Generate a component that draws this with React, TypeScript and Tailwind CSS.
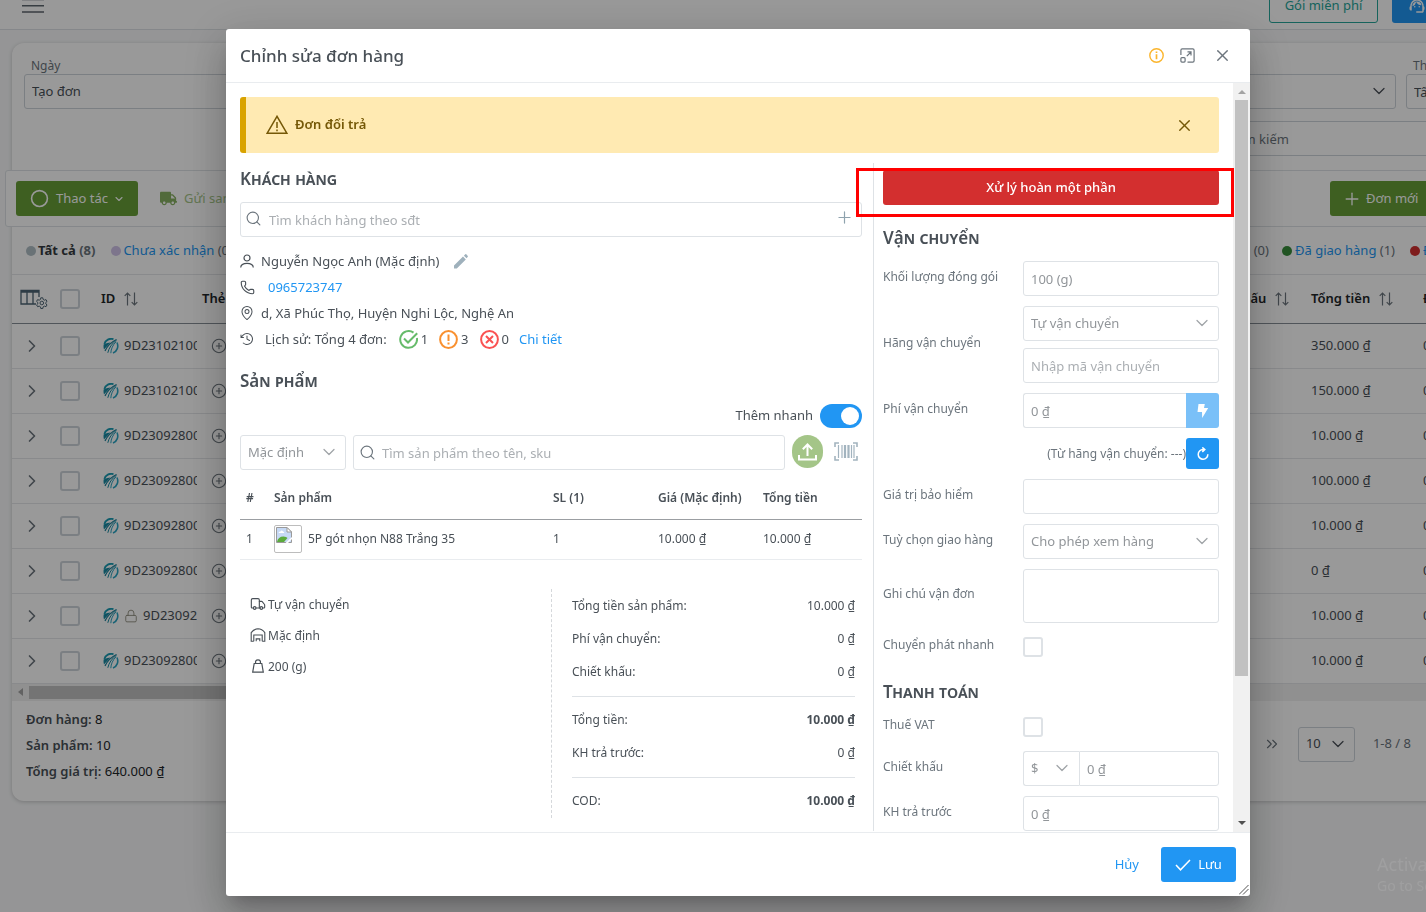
import React, { useState } from "react";
import { twMerge } from "tailwind-merge";
import {
  ChevronDown,
  ChevronRight,
  ChevronsRight,
  Circle,
  CirclePlus,
  Lock,
  Phone,
  Plus,
  Search,
  Truck,
  X,
} from "lucide-react";
import { PiClockCounterClockwise, PiMapPin } from "react-icons/pi";
import { FaTruck } from "react-icons/fa";
import { MdOutlineSupportAgent } from "react-icons/md";

type Order = {
  code: string;
  total: string;
  locked?: boolean;
};

const orders: Order[] = [
  { code: "9D23102100", total: "350.000 ₫" },
  { code: "9D23102100", total: "150.000 ₫" },
  { code: "9D23092800", total: "10.000 ₫" },
  { code: "9D23092800", total: "100.000 ₫" },
  { code: "9D23092800", total: "10.000 ₫" },
  { code: "9D23092800", total: "0 ₫" },
  { code: "9D23092", total: "10.000 ₫", locked: true },
  { code: "9D23092800", total: "10.000 ₫" },
];

const fieldClass =
  "h-[35px] w-full min-w-0 rounded-[3px] border border-[#dee2e6] bg-white px-[7px] text-[13px] text-[#92969a] placeholder:text-[#abafb3] outline-none";
const darkField = "border-[#ced4da] text-[#495057]";

/* ---------- icons ---------- */

const MenuIcon = () => (
  <svg width="22" height="15" viewBox="0 0 22 15" stroke="#5d666e" strokeWidth="1.6">
    <path d="M0 1.5h22M0 7.800h22M0 14h22" />
  </svg>
);

const SortIcon = () => (
  <svg width="14" height="14" viewBox="0 0 14 14" fill="none" stroke="#6c757d" strokeWidth="1.2">
    <path d="M3.5 13.5V1M.7 3.8 3.5 1l2.8 2.8M10.5.5V13M7.7 10.2l2.8 2.8 2.8-2.8" />
  </svg>
);

const ColumnsIcon = () => (
  <svg width="28" height="20" viewBox="0 0 28 20" fill="none" stroke="#4d6575" strokeWidth="1.3">
    <path d="M16 15H1V1.500h18V8M1 3h18M7 2v13M13 2v13" />
    <circle cx="21.800" cy="14" r="1.800" strokeWidth="1" />
    <path
      strokeWidth="1"
      d="m20.800 8.800-.3 1.600-1.300.8-1.600-.6-1 1.800 1.200 1.100v1.300l-1.200 1.100 1 1.800 1.600-.6 1.300.8.3 1.600h2l.3-1.600 1.300-.8 1.600.6 1-1.800-1.200-1.100v-1.300l1.200-1.100-1-1.800-1.600.6-1.300-.8-.3-1.600z"
    />
  </svg>
);

const ShopLogo = () => (
  <svg width="16" height="16" viewBox="0 0 16 16" fill="none" className="shrink-0">
    <path d="M10.500 1.200A7 7 0 0 0 1.400 6" stroke="#1a9cb3" strokeWidth="1.800" />
    <path d="M.6 6.500Q4.500 4.500 7.500 4.500L1 11.500Q.2 9 .6 6.500z" fill="#1a8ba3" />
    <path d="M2 13C4 8.500 8.500 4 13.500 1.500" stroke="#1a7f99" strokeWidth="1.200" />
    <path d="M4.800 14.800C5.800 10 9 5.500 13.500 2.200" stroke="#1a8ba3" />
    <path d="M7.800 15.200C8 11 9.800 7 13 3.800" stroke="#2aa5c4" />
    <path d="M14 4.500c1.800 4 .3 8.800-4 10.600" stroke="#2aa5c4" strokeWidth="1.600" />
  </svg>
);

const InfoIcon = () => (
  <svg width="15" height="15" viewBox="0 0 15 15" fill="none" stroke="#fbb52d">
    <circle cx="7.500" cy="7.500" r="6.700" strokeWidth="1.400" />
    <path d="M7.500 6.300v5M7.500 3.600v1.500" strokeWidth="1.700" />
  </svg>
);

const MaximizeIcon = () => (
  <svg width="15" height="15" viewBox="0 0 15 15" fill="none" stroke="#6c757d" strokeWidth="1.200">
    <path d="M.9 7V2.200Q.9.9 2.200.9h10.600q1.300 0 1.300 1.300v10.600q0 1.300-1.300 1.300H7.500" />
    <rect x=".9" y="9.600" width="4.200" height="4.500" rx="1" />
    <path d="M6.800 8.200 11 4M7.500 3.900H11v3.500" />
  </svg>
);

const WarningIcon = () => (
  <svg width="22" height="20" viewBox="0 0 22 20" fill="none" stroke="#755807" strokeWidth="1.500">
    <path d="M11 1.300 1.200 18.200h19.600zM11 7v6M11 14.500v1.700" />
  </svg>
);

const UserIcon = () => (
  <svg width="14" height="14" viewBox="0 0 14 14" fill="none" stroke="#495057" strokeWidth="1.200">
    <circle cx="7" cy="4" r="3" />
    <path d="M.7 13.500C.9 10.800 3.300 9.400 7 9.400s6.100 1.400 6.300 4.100" />
  </svg>
);

const PencilIcon = () => (
  <svg width="14" height="15" viewBox="0 0 14 15" fill="#9fb1bc">
    <path d="M0 14.500v-2.900L9 2.600l2.800 2.800-9 9.100zM9.900 1.700 11.300.3q.5-.4 1 0l1.500 1.600q.3.400 0 .8l-1.200 1.600z" />
  </svg>
);

const DoneIcon = () => (
  <svg width="19" height="19" viewBox="0 0 19 19" fill="none" stroke="#66bb6a" strokeWidth="2">
    <path d="M17.900 8A8.400 8.400 0 1 1 14.500 2.600" />
    <path d="m5 8.500 4 4 9.200-9.200" />
  </svg>
);

const AlertIcon = () => (
  <svg width="19" height="19" viewBox="0 0 19 19" fill="none" stroke="#f9902f" strokeWidth="2">
    <circle cx="9.500" cy="9.500" r="8.400" />
    <path d="M9.500 4.500V11M9.500 12.500v2" />
  </svg>
);

const FailIcon = () => (
  <svg width="19" height="19" viewBox="0 0 19 19" fill="none" stroke="#fa5252" strokeWidth="2">
    <circle cx="9.500" cy="9.500" r="8.400" />
    <path d="m6 6 7 7m0-7-7 7" />
  </svg>
);

const UploadIcon = () => (
  <svg width="19" height="18" viewBox="0 0 19 18" fill="none" stroke="#fff" strokeWidth="2">
    <path d="M9.500 13V1.500M4.800 6.200l4.700-4.700 4.700 4.700M1 12v4.500h17V12" />
  </svg>
);

const BarcodeIcon = () => (
  <svg width="24" height="19" viewBox="0 0 24 19" fill="none" stroke="#a3b4bf">
    <path d="M1 5V1h4M19 1h4v4M23 14v4h-4M5 18H1v-4" strokeWidth="1.600" />
    <path d="M4.500 3v13M8 3v13M17.500 3v13M20 3v13" strokeWidth="1.200" />
    <path d="M11 3v13M14.500 3v13" strokeWidth="2.200" />
  </svg>
);

const BrokenImage = () => (
  <svg width="16" height="16" viewBox="0 0 16 16">
    <path d="M.5.5H11L15.500 5v10.500H.5z" fill="#c6d9f5" stroke="#9a9a9a" />
    <path d="M11 .5V5h4.500z" fill="#fff" stroke="#9a9a9a" />
    <path d="M2.500 6q.3-1.800 2-1.500Q5.500 2.500 7 4.500q1.500.2 1.200 1.500z" fill="#fff" />
    <path d="M1 15q1-5.500 6.500-5.500 3 .2 4 1.500L8 15z" fill="#5bab3c" />
    <path d="m9.500 16 6.500-6v2l-4 4z" fill="#fff" />
  </svg>
);

const WarehouseIcon = () => (
  <svg width="16" height="14" viewBox="0 0 16 14" fill="none" stroke="#495057" strokeWidth="1.100">
    <path d="M3.800 13.200H1.200V4.600Q4 1 8 .8q4 .2 6.800 3.800v8.600h-2.600M3.800 13.200V7h8.400v6.200M6.200 13.200v-2.300h3.600v2.300" />
  </svg>
);

const WeightIcon = () => (
  <svg width="12" height="14" viewBox="0 0 12 14" fill="none" stroke="#495057" strokeWidth="1.200">
    <path d="M2.200 4.500h7.600l1.500 8.700H.7zM3.800 4.200C3 2.500 4 .8 6 .8s3 1.700 2.200 3.400" />
  </svg>
);

const BoltIcon = () => (
  <svg width="12" height="14" viewBox="0 0 12 14" fill="#fff">
    <path d="M1.500 0h6.300L7 4h4.200L5.200 14 5 8H.5z" />
  </svg>
);

const RefreshIcon = () => (
  <svg width="12" height="13" viewBox="0 0 12 13" fill="none" stroke="#fff" strokeWidth="1.500">
    <path d="M10.800 7.200A4.800 4.800 0 1 1 6 2.600h1.500M5.300.4l2.500 2.200-2.500 2.300" />
  </svg>
);

const CheckIcon = () => (
  <svg width="16" height="12" viewBox="0 0 16 12" fill="none" stroke="#fff" strokeWidth="1.500">
    <path d="m1 6 4.500 4.800L15 1" />
  </svg>
);

const ResizeGrip = () => (
  <svg width="10" height="10" viewBox="0 0 10 10" stroke="#555" className="absolute right-px bottom-px">
    <path d="M0 9.500 9.500 0M4 9.500 9.500 4" />
  </svg>
);

/* ---------- shared bits ---------- */

type selectProps = {
  id: string;
  value: string;
  className?: string;
  fieldStyle?: string;
  iconColor?: string;
};
const SelectField = ({
  id,
  value,
  className = "w-full",
  fieldStyle,
  iconColor = "#a0a4a8",
}: selectProps) => (
  <div className={twMerge("relative", className)}>
    <select id={id} aria-label={value} className={twMerge(fieldClass, "block appearance-none", fieldStyle)}>
      <option>{value}</option>
    </select>
    <ChevronDown
      size={20}
      strokeWidth={1.5}
      color={iconColor}
      className="pointer-events-none absolute top-[7px] right-[7px]"
    />
  </div>
);

const Box = ({ id, dark }: { id: string; dark?: boolean }) => (
  <input
    id={id}
    type="checkbox"
    aria-label={id}
    className={twMerge(
      "block size-5 shrink-0 appearance-none rounded-[3px] border-2 border-[#dee2e6] bg-white",
      dark && "border-[#ced4da]"
    )}
  />
);

// the small caps only cover part of the alphabet, so some letters stay lower case
const SectionTitle = ({ children }: { children: React.ReactNode }) => (
  <h2 className="text-[17px] leading-[22px] font-semibold text-[#495057] [font-variant-caps:small-caps]">
    {children}
  </h2>
);
const Lower = ({ children }: { children: React.ReactNode }) => (
  <span className="[font-variant-caps:normal]">{children}</span>
);

type rowProps = {
  id: string;
  label: string;
  children: React.ReactNode;
};
const FormRow = ({ id, label, children }: rowProps) => (
  <div className="flex min-h-7 items-center">
    <label htmlFor={id} className="w-[140px] shrink-0 pb-1 text-xs text-[#6c757d]">
      {label}
    </label>
    <div className="flex min-w-0 flex-1 flex-col gap-[7px]">{children}</div>
  </div>
);

/* ---------- order list behind the dialog ---------- */

const Dot = ({ className }: { className: string }) => (
  <span className={twMerge("size-2.5 rounded-full", className)} />
);

const OrdersPage = () => (
  <div className="-mr-[50px]">
    <header className="-mt-[30px] flex h-[60px] items-end justify-between border-b border-[#dee2e6] bg-white pr-3 pb-[6px] pl-[22px]">
      <button aria-label="Menu" className="flex h-[35px] items-center">
        <MenuIcon />
      </button>
      <div className="flex gap-[14px]">
        <button className="h-[35px] w-[109px] rounded-[3px] border border-[#26a69a] text-[13px] text-[#26a69a]">
          Gói miễn phí
        </button>
        <button aria-label="Hỗ trợ" className="flex h-[35px] w-[72px] items-center rounded-[3px] bg-[#2196f3] pl-4 text-white">
          <MdOutlineSupportAgent size={18} />
        </button>
      </div>
    </header>

    <div className="mx-3 mt-[13px] rounded-xl bg-white shadow-[0_1px_4px_rgba(0,0,0,0.2)]">
      <div className="flex h-[127px] flex-col px-3 pt-[15px]">
        <div className="flex gap-[10px]">
          <div className="flex-1">
            <label htmlFor="date" className="block px-[7px] text-xs leading-4 text-[#6c757d]">Ngày</label>
            <SelectField id="date" value="Tạo đơn" iconColor="#495057" fieldStyle={darkField} />
          </div>
          <div className="flex-1">
            <label htmlFor="source" className="block px-[7px] text-xs leading-4 text-[#6c757d]">Nguồn</label>
            <SelectField id="source" value="Tất cả" iconColor="#495057" fieldStyle={darkField} />
          </div>
          <div className="w-[46px]">
            <label htmlFor="tag" className="block px-[7px] text-xs leading-4 text-[#6c757d]">Thẻ</label>
            <input id="tag" defaultValue="Tất cả" className={twMerge(fieldClass, "block", darkField)} />
          </div>
        </div>
        <div className="mt-3 flex justify-end">
          <div className="w-[260px]">
            <input
              aria-label="Tìm kiếm"
              placeholder="Tìm kiếm"
              className={twMerge(fieldClass, "border-[#ced4da] pl-[40px] placeholder:text-[#6c757d]")}
            />
          </div>
        </div>
      </div>

      <div className="-mx-[7px] flex h-[57px] items-center justify-between rounded-[3px] border border-[#dee2e6] bg-white px-[10px]">
        <div className="flex items-center gap-[22px]">
          <button className="flex h-[35px] w-[122px] items-center rounded-[3px] bg-[#689f38] pl-[14px] text-[13px] text-white">
            <Circle size={19} strokeWidth={2} className="mr-[7px]" />
            Thao tác
            <ChevronDown size={12} strokeWidth={2.2} className="ml-[5px]" />
          </button>
          <button className="flex items-center gap-[7px] text-[13px] text-[#a4c588]">
            <FaTruck size={17} className="text-[#88b163]" />
            Gửi sang hãng vận chuyển
          </button>
        </div>
        <button className="flex h-[35px] w-[130px] items-center gap-1 rounded-[3px] bg-[#689f38] pl-3 text-[13px] text-white">
          <Plus size={20} strokeWidth={1.6} />
          Đơn mới
        </button>
      </div>

      <div className="flex h-12 items-center justify-between border-b border-[#e4e6e9] pl-[14px] text-[13px] text-[#6c757d]">
        <div className="flex items-center gap-[2px]">
          <Dot className="bg-[#b0bec5]" />
          <b className="mr-[14px] font-bold text-[#343a40]">
            Tất cả <span className="text-[#6c757d]">(8)</span>
          </b>
          <Dot className="bg-[#d1c4e9]" />
          <span><a href="#new" className="text-[#2196f3]">Chưa xác nhận</a> (0)</span>
        </div>
        <div className="flex items-center gap-[3px]">
          <span className="mr-[10px]">(0)</span>
          <Dot className="bg-[#388e3c]" />
          <span className="mr-3"><a href="#done" className="text-[#2196f3]">Đã giao hàng</a> (1)</span>
          <Dot className="bg-[#d32f2f]" />
          <a href="#returned" className="w-[41px] truncate text-[#2196f3]">Đang hoàn</a>
        </div>
      </div>

      <table className="w-full table-fixed border-collapse text-left text-[13px] text-[#495057]">
        <thead>
          <tr className="h-12 border-b border-[#868e96] text-[#212529] [&>th]:font-semibold">
            <th className="w-10 pl-2"><ColumnsIcon /></th>
            <th className="w-[39px] pl-2"><Box id="all" dark /></th>
            <th className="w-[111px] pl-[10px]">
              <span className="flex items-center gap-[9px]">ID <SortIcon /></span>
            </th>
            <th>Thẻ</th>
            <th className="w-[101px] whitespace-nowrap">
              <span className="flex items-center gap-[9px]">Chiết khấu <SortIcon /></span>
            </th>
            <th className="w-[112px] pl-3">
              <span className="flex items-center gap-[9px]">Tổng tiền <SortIcon /></span>
            </th>
            <th className="w-[53px] pl-3">Đã trả</th>
          </tr>
        </thead>
        <tbody>
          {orders.map((order, index) => (
            <tr key={index} className="h-[45px] border-b border-[#e4e6e9]">
              <td className="pl-[10px]"><ChevronRight size={20} strokeWidth={2} color="#6c757d" /></td>
              <td className="pl-2"><Box id={`row-${index}`} dark /></td>
              <td className="pr-[5px] pl-3">
                <div className="flex items-center gap-[5px] overflow-hidden">
                  <ShopLogo />
                  {order.locked && <Lock size={14} strokeWidth={1.5} color="#8d8a7c" className="shrink-0" />}
                  <span>{order.code}</span>
                </div>
              </td>
              <td className="pl-[9px]"><CirclePlus size={16} strokeWidth={1.6} color="#6c757d" /></td>
              <td />
              <td className="pl-3">{order.total}</td>
              <td className="pl-3">0 ₫</td>
            </tr>
          ))}
        </tbody>
      </table>

      <div className="flex h-[17px] items-center bg-[#f1f1f1]">
        <span className="ml-[6px] border-y-4 border-r-[5px] border-y-transparent border-r-[#a3a3a3]" />
        <span className="ml-[6px] h-[13px] w-[500px] bg-[#c1c1c1]" />
      </div>

      <div className="flex h-[100px] justify-between pr-[53px] pl-[14px] text-[13px] text-[#212529]">
        <div className="pt-[5px] leading-[26px] [&_b]:font-semibold [&_b]:text-[#495057]">
          <p><b>Đơn hàng:</b> 8</p>
          <p><b>Sản phẩm:</b> 10</p>
          <p><b>Tổng giá trị:</b> 640.000 ₫</p>
        </div>
        <div className="flex items-center self-start pt-[26px] text-[#6c757d]">
          <button aria-label="Trang cuối" className="mr-[17px]"><ChevronsRight size={18} strokeWidth={1.5} /></button>
          <SelectField id="page-size" value="10" className="mr-[18px] w-[57px]" iconColor="#495057" fieldStyle={darkField} />
          <span>1-8 / 8</span>
        </div>
      </div>
    </div>
  </div>
);

/* ---------- dialog ---------- */

const Customer = () => (
  <section className="text-[13px] text-[#495057]">
    <SectionTitle>Khách hàng</SectionTitle>
    <div className="relative mt-3">
      <Search size={17} strokeWidth={1.6} color="#6c757d" className="absolute top-2 left-[5px]" />
      <input
        aria-label="Tìm khách hàng"
        placeholder="Tìm khách hàng theo sđt"
        className={twMerge(fieldClass, "block pl-7")}
      />
      <button aria-label="Thêm khách hàng" className="absolute top-[6px] right-2">
        <Plus size={19} strokeWidth={1.5} color="#8fa3ae" />
      </button>
    </div>
    <div className="mt-[11px] leading-[26px]">
      <p className="flex items-center">
        <span className="mr-[7px]"><UserIcon /></span> Nguyễn Ngọc Anh (Mặc định)
        <button aria-label="Sửa khách hàng" className="ml-[15px]"><PencilIcon /></button>
      </p>
      <p className="flex items-center">
        <Phone size={15} strokeWidth={1.8} className="mr-[13px]" />
        <a href="tel:0965723747" className="text-[#2196f3]">0965723747</a>
      </p>
      <p className="flex items-center">
        <PiMapPin size={16} className="mr-[6px] -ml-px" /> d, Xã Phúc Thọ, Huyện Nghi Lộc, Nghệ An
      </p>
      <p className="flex items-center">
        <PiClockCounterClockwise size={16} className="mr-[10px] -ml-px" /> Lịch sử: Tổng 4 đơn:
        <span className="ml-3 flex items-center gap-[3px]"><DoneIcon /> 1</span>
        <span className="ml-[11px] flex items-center gap-[3px]"><AlertIcon /> 3</span>
        <span className="ml-[11px] flex items-center gap-[3px]"><FailIcon /> 0</span>
        <a href="#history" className="ml-[10px] text-[#2196f3]">Chi tiết</a>
      </p>
    </div>
  </section>
);

const Products = () => {
  const [quickAdd, setQuickAdd] = useState(true);
  return (
    <section className="mt-[18px] text-[#495057]">
      <SectionTitle>S<Lower>ả</Lower>n ph<Lower>ẩ</Lower>m</SectionTitle>
      <label className="mt-3 flex h-6 items-center justify-end gap-[7px] text-[13px]">
        Thêm nhanh
        <input
          type="checkbox"
          checked={quickAdd}
          onChange={() => setQuickAdd((prev) => !prev)}
          className="relative h-6 w-[42px] appearance-none rounded-full bg-[#ced4da] before:absolute before:top-[3px] before:left-[3px] before:size-[18px] before:rounded-full before:bg-white checked:bg-[#2196f3] checked:before:left-[21px]"
        />
      </label>
      <div className="mt-[7px] flex items-center gap-[7px]">
        <SelectField id="warehouse" value="Mặc định" className="w-[106px] shrink-0" />
        <div className="relative flex-1">
          <Search size={17} strokeWidth={1.6} color="#6c757d" className="absolute top-[9px] left-[6px]" />
          <input
            aria-label="Tìm sản phẩm"
            placeholder="Tìm sản phẩm theo tên, sku"
            className={twMerge(fieldClass, "block pl-7")}
          />
        </div>
        <button aria-label="Tải lên" className="flex h-[33px] w-[31px] items-center justify-center self-start rounded-full bg-[#a4c588]">
          <UploadIcon />
        </button>
        <button aria-label="Quét mã vạch" className="flex h-[33px] w-8 items-center justify-center self-start">
          <BarcodeIcon />
        </button>
      </div>

      <table className="mt-[7px] w-full table-fixed text-left text-xs">
        <thead>
          <tr className="h-[42px] border-b border-[#9b9ea2] [&>th]:font-semibold">
            <th className="w-[34px] pl-[6px]">#</th>
            <th>Sản phẩm</th>
            <th className="w-[105px]">SL (1)</th>
            <th className="w-[105px]">Giá (Mặc định)</th>
            <th className="w-[99px]">Tổng tiền</th>
          </tr>
        </thead>
        <tbody>
          <tr className="h-10 border-b border-[#e9ecef]">
            <td className="pl-[6px]">1</td>
            <td>
              <div className="flex items-center gap-[6px]">
                <span className="size-7 rounded-[2px] border border-[#bdbdbd] p-px"><BrokenImage /></span>
                5P gót nhọn N88 Trắng 35
              </div>
            </td>
            <td>1</td>
            <td>10.000 ₫</td>
            <td>10.000 ₫</td>
          </tr>
        </tbody>
      </table>
    </section>
  );
};

type lineProps = { label: string; value: string; strong?: boolean };
const SummaryLine = ({ label, value, strong }: lineProps) => (
  <div className="flex h-[33px] items-center justify-between">
    <dt>{label}</dt>
    <dd className={twMerge(strong && "font-bold")}>{value}</dd>
  </div>
);

const Summary = () => (
  <section className="mt-[29px] flex text-xs text-[#495057]">
    <ul className="flex-1 pl-[10px] leading-[31px]">
      <li className="flex items-center gap-[2px]"><Truck size={16} strokeWidth={1.7} /> Tự vận chuyển</li>
      <li className="flex items-center gap-[2px]"><WarehouseIcon /> Mặc định</li>
      <li className="flex items-center gap-[2px]"><span className="flex w-4 justify-center"><WeightIcon /></span> 200 (g)</li>
    </ul>
    <dl className="w-[311px] border-l border-dashed border-[#d5d8db] pt-px pr-[7px] pl-5">
      <SummaryLine label="Tổng tiền sản phẩm:" value="10.000 ₫" />
      <SummaryLine label="Phí vận chuyển:" value="0 ₫" />
      <SummaryLine label="Chiết khấu:" value="0 ₫" />
      <div className="my-[7px] border-t border-[#dee2e6]" />
      <SummaryLine label="Tổng tiền:" value="10.000 ₫" strong />
      <SummaryLine label="KH trả trước:" value="0 ₫" />
      <div className="my-[7px] border-t border-[#dee2e6]" />
      <SummaryLine label="COD:" value="10.000 ₫" strong />
    </dl>
  </section>
);

const Shipping = () => (
  <div className="flex flex-col gap-[10px]">
    <div className="pb-[2px]">
      <SectionTitle>V<Lower>ậ</Lower>n chuy<Lower>ể</Lower>n</SectionTitle>
    </div>
    <FormRow id="weight" label="Khối lượng đóng gói">
      <input id="weight" defaultValue="100 (g)" className={fieldClass} />
    </FormRow>
    <FormRow id="carrier" label="Hãng vận chuyển">
      <SelectField id="carrier" value="Tự vận chuyển" />
      <input aria-label="Mã vận chuyển" placeholder="Nhập mã vận chuyển" className={fieldClass} />
    </FormRow>
    <FormRow id="fee" label="Phí vận chuyển">
      <div className="flex">
        <input id="fee" defaultValue="0 ₫" className={twMerge(fieldClass, "rounded-r-none border-r-0")} />
        <button aria-label="Tính phí" className="flex w-[33px] shrink-0 items-center justify-center rounded-r-[3px] bg-[#7ac0f8]">
          <BoltIcon />
        </button>
      </div>
    </FormRow>
    <div className="flex items-center justify-end text-xs text-[#6c757d]">
      (Từ hãng vận chuyển: ---)
      <button aria-label="Làm mới" className="flex h-[31px] w-[33px] items-center justify-center rounded-[3px] bg-[#2196f3]">
        <RefreshIcon />
      </button>
    </div>
    <FormRow id="insurance" label="Giá trị bảo hiểm">
      <input id="insurance" className={fieldClass} />
    </FormRow>
    <FormRow id="inspect" label="Tuỳ chọn giao hàng">
      <SelectField id="inspect" value="Cho phép xem hàng" />
    </FormRow>
    <FormRow id="note" label="Ghi chú vận đơn">
      <textarea id="note" className="block h-[54px] resize-none rounded-[3px] border border-[#dee2e6]" />
    </FormRow>
    <FormRow id="express" label="Chuyển phát nhanh">
      <Box id="express" />
    </FormRow>
    <div className="pt-[10px]">
      <SectionTitle>Thanh toán</SectionTitle>
    </div>
    <FormRow id="vat" label="Thuế VAT">
      <Box id="vat" />
    </FormRow>
    <FormRow id="discount" label="Chiết khấu">
      <div className="flex">
        <SelectField id="discount-type" value="$" className="w-14 shrink-0" fieldStyle="rounded-r-none border-r-0" />
        <input id="discount" defaultValue="0 ₫" className={twMerge(fieldClass, "rounded-l-none")} />
      </div>
    </FormRow>
    <FormRow id="prepaid" label="KH trả trước">
      <input id="prepaid" defaultValue="0 ₫" className={fieldClass} />
    </FormRow>
  </div>
);

const OrderDialog = () => (
  <div
    role="dialog"
    aria-label="Chỉnh sửa đơn hàng"
    className="relative flex flex-1 flex-col rounded-[3px] bg-white shadow-[0_11px_15px_-7px_rgba(0,0,0,0.2),0_24px_38px_3px_rgba(0,0,0,0.14),0_9px_46px_8px_rgba(0,0,0,0.12)]"
  >
    <header className="flex h-[54px] shrink-0 items-center justify-between border-b border-[#e9ecef] pr-[18px] pl-[14px]">
      <h1 className="text-[17px] font-medium text-[#495057]">Chỉnh sửa đơn hàng</h1>
      <div className="flex items-center">
        <button aria-label="Thông tin" className="mr-4"><InfoIcon /></button>
        <button aria-label="Phóng to" className="mr-[18px]"><MaximizeIcon /></button>
        <button aria-label="Đóng" className="text-[#6c757d]"><X size={19} strokeWidth={1.7} /></button>
      </div>
    </header>

    <div className="flex min-h-0 flex-1 overflow-hidden">
      <div className="min-w-0 flex-1 p-[14px] pb-0">
        <div className="flex h-14 items-center rounded-[3px] border-l-[6px] border-[#d9a300] bg-[#ffeab2] pr-[25px] pl-5 text-[13px] font-semibold text-[#755807]">
          <WarningIcon />
          <span className="ml-[7px] flex-1">Đơn đổi trả</span>
          <button aria-label="Đóng thông báo"><X size={19} strokeWidth={1.7} /></button>
        </div>

        <div className="mt-[10px] flex gap-[11px]">
          <div className="min-w-0 flex-1 pt-[5px]">
            <Customer />
            <Products />
            <Summary />
          </div>
          <div className="relative w-[346px] shrink-0 border-l border-[#dee2e6] pt-[7px] pl-[9px]">
            <button className="mb-[22px] block h-[35px] w-full rounded-[3px] bg-[#d32f2f] text-[13px] font-medium text-white">
              Xử lý hoàn một phần
            </button>
            <Shipping />
            <div className="pointer-events-none absolute top-[5px] -right-[15px] -left-[18px] z-10 h-[49px] border-[3px] border-[#ff0000]" />
          </div>
        </div>
      </div>

      <div className="flex w-[17px] shrink-0 flex-col items-center bg-[#f1f1f1]">
        <span className="mt-[7px] mb-[6px] border-x-4 border-b-4 border-x-transparent border-b-[#a3a3a3]" />
        <span className="h-[576px] w-[13px] bg-[#c1c1c1]" />
        <span className="mt-auto mb-[7px] border-x-4 border-t-4 border-x-transparent border-t-[#505050]" />
      </div>
    </div>

    <footer className="flex h-16 shrink-0 items-center justify-end gap-[22px] border-t border-[#e9ecef] pr-[14px] text-[13px]">
      <button className="text-[#2196f3]">Hủy</button>
      <button className="flex h-[35px] w-[75px] items-center justify-center gap-[7px] rounded-[3px] bg-[#2196f3] text-white">
        <CheckIcon />
        Lưu
      </button>
    </footer>
    <ResizeGrip />
  </div>
);

export default function App() {
  return (
    <div className="relative h-screen overflow-hidden bg-[#f8f9fa] font-['Noto_Sans',sans-serif]">
      <OrdersPage />
      <div className="fixed inset-0 flex bg-black/40 pt-[29px] pr-44 pb-4 pl-[226px]">
        <OrderDialog />
      </div>
      <div className="pointer-events-none absolute bottom-4 left-full -ml-[49px] whitespace-nowrap text-white/10">
        <p className="text-lg leading-6">Activate Windows</p>
        <p className="text-sm leading-5">Go to Settings to activate Windows.</p>
      </div>
    </div>
  );
}
